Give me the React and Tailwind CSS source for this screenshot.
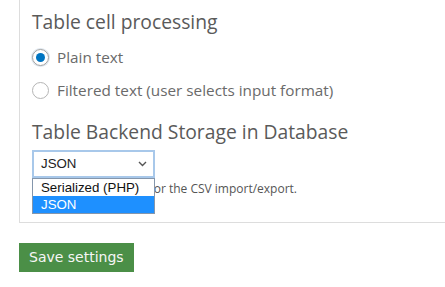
export default function App() {
  const os = { fontFamily: '"Open Sans", "Noto Sans", sans-serif' };
  const ar = { fontFamily: '"Liberation Sans", Arial, sans-serif' };
  return (
    <div className="w-[445px] h-[287px] bg-white overflow-hidden pl-[19px]" style={os}>
      <div className="border-l border-b border-[#dddddd] pl-[12px] pt-[10px] pb-[8px]">
        <h2 className="text-[19.3px] leading-[24px] text-[#5a5a5a] font-normal">Table cell processing</h2>
        <div className="mt-[11px] flex flex-col gap-[9px]">
          <label className="flex items-center h-[24px] gap-[8px]">
            <span className="w-[17px] h-[17px] rounded-full border border-[#a0a0a0] flex items-center justify-center shadow-[0_0_0_1px_#dde6ef]">
              <span className="w-[9px] h-[9px] rounded-full bg-[#0075c2]" />
            </span>
            <span className="text-[15.3px] text-[#6a6a6a]">Plain text</span>
          </label>
          <label className="flex items-center h-[24px] gap-[8px]">
            <span className="w-[17px] h-[17px] rounded-full border border-[#b5b5b5]" />
            <span className="text-[15.3px] text-[#6a6a6a]">Filtered text (user selects input format)</span>
          </label>
        </div>
        <h2 className="mt-[18px] text-[19.3px] leading-[24px] text-[#5a5a5a] font-normal">Table Backend Storage in Database</h2>
        <div className="relative mt-[6px]">
          <div className="w-[123px] h-[28px] border-2 border-[#a8c8ea] flex items-center justify-between pl-[7px] pr-[6px] bg-white" style={ar}>
            <span className="text-[13.3px] text-[#222222]">JSON</span>
            <svg width="9" height="6" viewBox="0 0 9 6"><path d="M1 1l3.5 3.5L8 1" fill="none" stroke="#555" strokeWidth="1.4" /></svg>
          </div>
          <p className="mt-[3px] text-[12px] leading-[16px] text-[#555555]">Storage format used for the CSV import/export.</p>
          <div className="absolute left-0 top-[28px] w-[123px] border border-[#8496ac] bg-white" style={ar}>
            <div className="h-[17px] leading-[17px] pl-[8px] text-[13.3px] text-[#111111]">Serialized (PHP)</div>
            <div className="h-[17px] leading-[17px] pl-[8px] text-[13.3px] text-white bg-[#1e90ff]">JSON</div>
          </div>
        </div>
        <div className="h-[17px]" />
      </div>
      <button className="mt-[20px] h-[29px] px-[10px] bg-[#4b8f47] text-[#f6f6f6] text-[14px]" style={{ fontFamily: '"DejaVu Sans", Verdana, sans-serif' }}>Save settings</button>
    </div>
  );
}
